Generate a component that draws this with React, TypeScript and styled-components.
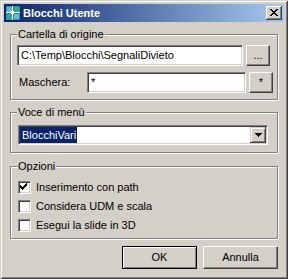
import styled, { createGlobalStyle } from 'styled-components';

const GlobalStyle = createGlobalStyle`
  html, body {
    margin: 0;
    padding: 0;
    background: #d4d0c8;
  }
  body {
    font-family: "Liberation Sans", Arial, sans-serif;
    font-size: 11px;
    color: #000;
  }
`;

const Window = styled.div`
  width: 288px;
  height: 279px;
  box-sizing: border-box;
  padding: 4px;
  background: #d4d0c8;
  box-shadow: inset 1px 1px 0 #d4d0c8, inset -1px -1px 0 #404040,
    inset 2px 2px 0 #ffffff, inset -2px -2px 0 #808080;
  display: flex;
  flex-direction: column;
`;

const TitleBar = styled.div`
  height: 18px;
  flex: none;
  display: flex;
  align-items: center;
  padding: 0 2px 0 1px;
  background: linear-gradient(to right, #0a246a, #a6caf0);
`;

const TitleText = styled.span`
  flex: 1;
  margin-left: 2px;
  color: #fff;
  font-weight: bold;
  font-size: 11px;
  line-height: 13px;
  white-space: nowrap;
`;

const CaptionButton = styled.div`
  width: 16px;
  height: 14px;
  box-sizing: border-box;
  background: #d4d0c8;
  box-shadow: inset -1px -1px 0 #404040, inset 1px 1px 0 #ffffff,
    inset -2px -2px 0 #808080;
  display: flex;
  align-items: center;
  justify-content: center;
  padding: 0 0 1px 0;
`;

const Body = styled.div`
  flex: 1;
  display: flex;
  flex-direction: column;
  padding: 12px 6px 0 6px;
`;

const GroupBox = styled.div<{ $pad: string; $mt: number }>`
  position: relative;
  margin-top: ${(p) => p.$mt}px;
  border: 1px solid #808080;
  box-shadow: inset 1px 1px 0 #ffffff, 1px 1px 0 #ffffff;
  padding: ${(p) => p.$pad};
  display: flex;
  flex-direction: column;
`;

const Legend = styled.span`
  position: absolute;
  top: -7px;
  left: 6px;
  padding: 0 1px;
  line-height: 13px;
  background: #d4d0c8;
  white-space: nowrap;
`;

const FieldRow = styled.div`
  display: flex;
  align-items: center;
  gap: 3px;
`;

const FieldRows = styled.div`
  display: flex;
  flex-direction: column;
  gap: 6px;
`;

const FieldLabel = styled.span`
  width: 67px;
  box-sizing: border-box;
  padding-left: 2px;
  line-height: 13px;
`;

const Edit = styled.div<{ $w: number }>`
  width: ${(p) => p.$w}px;
  height: 21px;
  box-sizing: border-box;
  background: #fff;
  border: 1px solid;
  border-color: #808080 #ffffff #ffffff #808080;
  box-shadow: inset 1px 1px 0 #404040, inset -1px -1px 0 #d4d0c8;
  padding: 2px 2px 0 3px;
  line-height: 15px;
  white-space: nowrap;
  overflow: hidden;
`;

const PushButton = styled.button<{ $w: number; $h: number; $default?: boolean }>`
  width: ${(p) => p.$w}px;
  height: ${(p) => p.$h}px;
  box-sizing: border-box;
  margin: 0;
  padding: 0;
  font-family: inherit;
  font-size: 11px;
  color: #000;
  background: #d4d0c8;
  border: 1px solid;
  border-color: ${(p) => (p.$default ? '#000' : '#ffffff #404040 #404040 #ffffff')};
  box-shadow: ${(p) =>
    p.$default
      ? 'inset 1px 1px 0 #ffffff, inset -1px -1px 0 #808080'
      : 'inset -1px -1px 0 #808080'};
  line-height: 13px;
`;

const Combo = styled.div`
  width: 250px;
  height: 20px;
  box-sizing: border-box;
  background: #fff;
  border: 1px solid;
  border-color: #808080 #ffffff #ffffff #808080;
  box-shadow: inset 1px 1px 0 #404040, inset -1px -1px 0 #d4d0c8;
  padding: 1px;
  display: flex;
  align-items: stretch;
`;

const ComboValue = styled.div`
  flex: 1;
  display: flex;
  align-items: stretch;
`;

const Selected = styled.span`
  background: #0a246a;
  color: #fff;
  padding: 0 1px 0 2px;
  line-height: 16px;
`;

const DropButton = styled.div`
  width: 16px;
  box-sizing: border-box;
  background: #d4d0c8;
  box-shadow: inset -1px -1px 0 #404040, inset 1px 1px 0 #d4d0c8,
    inset 2px 2px 0 #ffffff, inset -2px -2px 0 #808080;
  display: flex;
  align-items: center;
  justify-content: center;
`;

const CheckList = styled.div`
  display: flex;
  flex-direction: column;
  gap: 6px;
`;

const CheckRow = styled.div`
  display: flex;
  align-items: center;
  gap: 5px;
  height: 13px;
`;

const CheckBox = styled.div`
  width: 13px;
  height: 13px;
  box-sizing: border-box;
  background: #fff;
  border: 1px solid;
  border-color: #808080 #ffffff #ffffff #808080;
  box-shadow: inset 1px 1px 0 #404040, inset -1px -1px 0 #d4d0c8;
  display: flex;
`;

const CheckText = styled.span`
  line-height: 13px;
  white-space: nowrap;
`;

const ButtonRow = styled.div`
  margin-top: 7px;
  display: flex;
  justify-content: flex-end;
  gap: 6px;
`;

const AppIcon = () => (
  <svg width="16" height="16" viewBox="0 0 16 16" shapeRendering="crispEdges">
    <rect x="0" y="0" width="16" height="16" fill="#0a246a" />
    <rect x="1" y="1" width="14" height="14" fill="#2f8f9c" />
    <rect x="2" y="2" width="5" height="5" fill="#5fc2c8" />
    <rect x="9" y="2" width="5" height="5" fill="#3aa58f" />
    <rect x="2" y="9" width="5" height="5" fill="#3aa58f" />
    <rect x="9" y="9" width="5" height="5" fill="#5fc2c8" />
    <rect x="1" y="7" width="14" height="1" fill="#ffffff" />
    <rect x="7" y="1" width="1" height="14" fill="#ffffff" />
    <rect x="6" y="6" width="3" height="3" fill="#ffffff" />
  </svg>
);

const CloseGlyph = () => (
  <svg width="8" height="7" viewBox="0 0 8 7" shapeRendering="crispEdges">
    <path
      fill="#000"
      d="M0 0h2v1H0zM6 0h2v1H6zM1 1h2v1H1zM5 1h2v1H5zM2 2h4v1H2zM3 3h2v1H3zM2 4h4v1H2zM1 5h2v1H1zM5 5h2v1H5zM0 6h2v1H0zM6 6h2v1H6z"
    />
  </svg>
);

const DownArrow = () => (
  <svg width="7" height="4" viewBox="0 0 7 4" shapeRendering="crispEdges">
    <path fill="#000" d="M0 0h7v1H0zM1 1h5v1H1zM2 2h3v1H2zM3 3h1v1H3z" />
  </svg>
);

const CheckMark = () => (
  <svg width="9" height="9" viewBox="0 0 9 9" shapeRendering="crispEdges">
    <path
      fill="#000"
      d="M1 3h1v3H1zM2 4h1v3H2zM3 5h1v3H3zM4 4h1v3H4zM5 3h1v3H5zM6 2h1v3H6zM7 1h1v3H7z"
    />
  </svg>
);

const options = [
  { label: 'Inserimento con path', checked: true },
  { label: 'Considera UDM e scala', checked: false },
  { label: 'Esegui la slide in 3D', checked: false },
];

const App = () => {
  return (
    <>
      <GlobalStyle />
      <Window>
        <TitleBar>
          <AppIcon />
          <TitleText>Blocchi Utente</TitleText>
          <CaptionButton>
            <CloseGlyph />
          </CaptionButton>
        </TitleBar>
        <Body>
          <GroupBox $mt={0} $pad="10px 0 6px 6px">
            <Legend>Cartella di origine</Legend>
            <FieldRows>
              <FieldRow>
                <Edit $w={226}>C:\Temp\Blocchi\SegnaliDivieto</Edit>
                <PushButton $w={24} $h={21}>...</PushButton>
              </FieldRow>
              <FieldRow>
                <FieldLabel>Maschera:</FieldLabel>
                <Edit $w={159}>*</Edit>
                <PushButton $w={24} $h={21}>*</PushButton>
              </FieldRow>
            </FieldRows>
          </GroupBox>
          <GroupBox $mt={12} $pad="12px 0 7px 7px">
            <Legend>Voce di menù</Legend>
            <Combo>
              <ComboValue>
                <Selected>BlocchiVari</Selected>
              </ComboValue>
              <DropButton>
                <DownArrow />
              </DropButton>
            </Combo>
          </GroupBox>
          <GroupBox $mt={13} $pad="14px 0 6px 7px">
            <Legend>Opzioni</Legend>
            <CheckList>
              {options.map((o) => (
                <CheckRow key={o.label}>
                  <CheckBox>{o.checked && <CheckMark />}</CheckBox>
                  <CheckText>{o.label}</CheckText>
                </CheckRow>
              ))}
            </CheckList>
          </GroupBox>
          <ButtonRow>
            <PushButton $w={75} $h={23} $default>
              OK
            </PushButton>
            <PushButton $w={75} $h={23}>
              Annulla
            </PushButton>
          </ButtonRow>
        </Body>
      </Window>
    </>
  );
};

export default App;
